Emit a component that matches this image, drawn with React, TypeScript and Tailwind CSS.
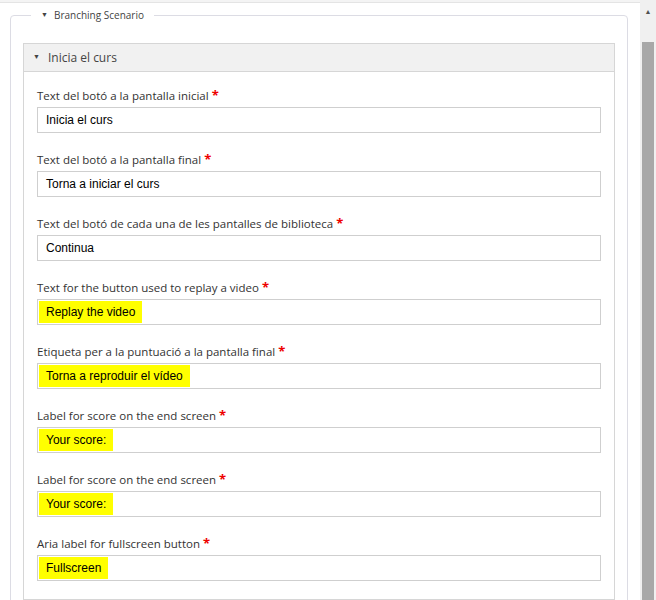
import React from "react";

const fields: [string, string, boolean][] = [
  ["Text del botó a la pantalla inicial", "Inicia el curs", false],
  ["Text del botó a la pantalla final", "Torna a iniciar el curs", false],
  ["Text del botó de cada una de les pantalles de biblioteca", "Continua", false],
  ["Text for the button used to replay a video", "Replay the video", true],
  ["Etiqueta per a la puntuació a la pantalla final", "Torna a reproduir el vídeo", true],
  ["Label for score on the end screen", "Your score:", true],
  ["Label for score on the end screen", "Your score:", true],
  ["Aria label for fullscreen button", "Fullscreen", true],
];

export default function App() {
  return (
    <div className="w-[656px] h-[600px] overflow-hidden bg-white flex relative" style={{ fontFamily: '"Open Sans", sans-serif' }}>
      <div className="absolute left-0 right-[16px] top-0 h-[3px] border-b border-[#e4e4e4] bg-[#f4f4f4]" />
      <div className="flex-1 pt-[15px] pl-[10px] pr-[12px]">
        <div className="relative border border-[#dcdce4] rounded-[4px] pt-[27px] px-[12px] h-[620px]">
          <div className="absolute -top-[8px] left-[20px] bg-white px-[10px] flex items-center gap-[6px] text-[10px] text-[#444] leading-[14px]">
            <span className="text-[7px]">▼</span>
            <span>Branching Scenario</span>
          </div>
          <div className="border border-[#d6d6d6]">
            <div className="h-[28px] bg-[#f1f1f1] border-b border-[#d6d6d6] flex items-center pl-[9px] gap-[8px] text-[12px] text-[#444]">
              <span className="text-[7px]">▼</span>
              <span>Inicia el curs</span>
            </div>
            <div className="px-[13px] pt-[14px] pb-[18px] flex flex-col gap-[17px]">
              {fields.map(([label, value, hl], i) => (
                <div key={i} className="flex flex-col gap-[2px]">
                  <div className="text-[11.5px] text-[#333] leading-[18px]">
                    {label}<span className="text-[#e00] ml-[3px] text-[13px] font-bold">*</span>
                  </div>
                  <div className="h-[26px] border border-[#cfcfcf] flex items-stretch p-[1px]">
                    <span
                      className={`flex items-center px-[7px] text-[12px] text-black ${hl ? "bg-[#ffff00]" : ""}`}
                      style={{ fontFamily: '"Liberation Sans", Arial, sans-serif' }}
                    >
                      {value}
                    </span>
                  </div>
                </div>
              ))}
            </div>
          </div>
        </div>
      </div>
      <div className="w-[16px] bg-[#f0f0f0] flex flex-col items-center">
        <div className="h-[42px] w-full flex justify-center pt-[7px] text-[7px] text-[#505050]">▲</div>
        <div className="w-[12px] flex-1 bg-[#a8a8a8]" />
      </div>
    </div>
  );
}
